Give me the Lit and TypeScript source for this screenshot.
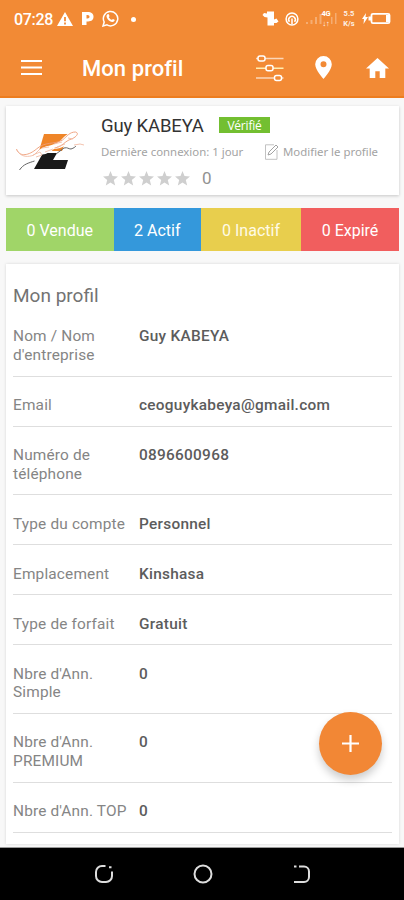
import { LitElement, html, svg, css } from "lit";
import { customElement } from "lit/decorators.js";

const stats = [
  { label: "0 Vendue", tone: "sold" },
  { label: "2 Actif", tone: "active" },
  { label: "0 Inactif", tone: "inactive" },
  { label: "0 Expiré", tone: "expired" },
];

const fields: [string, string][] = [
  ["Nom / Nom d'entreprise", "Guy KABEYA"],
  ["Email", "ceoguykabeya@gmail.com"],
  ["Numéro de téléphone", "0896600968"],
  ["Type du compte", "Personnel"],
  ["Emplacement", "Kinshasa"],
  ["Type de forfait", "Gratuit"],
  ["Nbre d'Ann. Simple", "0"],
  ["Nbre d'Ann. PREMIUM", "0"],
  ["Nbre d'Ann. TOP", "0"],
];

@customElement("status-bar")
class StatusBar extends LitElement {
  static styles = css`
    :host { display: flex; height: 37px; padding: 0 13px 0 14px; align-items: center; color: #fff;
      justify-content: space-between; font: 500 16px/20px Roboto, sans-serif; }
    .group { display: flex; align-items: center; }
    .time { width: 43px; letter-spacing: -0.3px; margin-top: 2px; }
    .park { width: 14px; margin-left: 8px; margin-right: 7px; }
    .dot { width: 5px; height: 5px; border-radius: 50%; background: #fff; margin-left: 12px; margin-top: 1px; }
    .hotspot { margin-left: 6px; }
    .signal { margin-left: 7px; }
    .stack { display: flex; flex-direction: column; align-items: center; gap: 1px; font: 700 7.5px/9px Roboto, sans-serif; }
    .net { width: 8px; letter-spacing: -0.3px; }
    .speed { width: 14px; margin: 0 6px 0 5px; opacity: .88; }
    svg { display: block; fill: #fff; }
  `;
  render() {
    return html`
      <div class="group">
        <span class="time">07:28</span>
        <svg width="16" height="14" viewBox="0 0 16 14"><path fill-rule="evenodd" d="M8 0 16 14H0ZM7.100 5v4.200h1.800V5Zm0 5.600v1.800h1.800v-1.800Z"/></svg>
        <svg class="park" width="14" height="15" viewBox="0 0 14 15"><path fill-rule="evenodd" d="M1 1h5.500C10.500 1 12.500 3 12.500 5.800S10.500 10.500 7.200 10.500H5.500V14H1Zm4.500 3v3.500h1c1.300 0 2-.6 2-1.700S7.800 4 6.500 4Z"/></svg>
        <svg width="17" height="17" viewBox="0 0 17 17"><path fill="none" stroke="#fff" stroke-width="1.500" d="M1 16 2.200 12A7.200 7.200 0 1 1 5 14.900Z"/><path d="M5.500 4.300c.6-.5 1.200-.4 1.400.2l.6 1.400c.1.500-.7 1-.7 1.300.6 1.200 1.600 2.100 2.900 2.600.5-.1.900-1 1.300-.9l1.500.8c.4.3.1 1.300-.6 1.800-1.100.8-2.900.3-4.300-.6-1.300-.9-2.700-2.600-3-4-.2-1 .3-2.100.9-2.600Z"/></svg>
        <span class="dot"></span>
      </div>
      <div class="group">
        <svg width="17" height="15" viewBox="0 0 17 15"><path d="M5 .5h7V8.500l2.500-1 2 3-2 1.500H12v2.500H5.500V6.500L2.500 6 .5 4l1.500-2 3 .5Z"/></svg>
        <svg class="hotspot" width="14" height="14" viewBox="0 0 14 14"><circle cx="7" cy="7" r="5.900" fill="none" stroke="#fff" stroke-width="1.500"/><path fill="none" stroke="#fff" stroke-width="1.500" d="M4.500 9.800A3.300 3.300 0 1 1 9.500 9.800M7 6.500V12"/></svg>
        <svg class="signal" width="16" height="13" viewBox="0 0 16 13" opacity=".3"><path d="M0 10h2v2H0ZM4.500 8h2v4h-2ZM9 5h2v7H9ZM13.500 2h2v10h-2Z"/></svg>
        <span class="stack net"><span>4G</span><span>↓↑</span></span>
        <svg width="7" height="13" viewBox="0 0 7 13" opacity=".3"><path d="M1 5h1.500v7H1ZM5 1h1.500v11H5Z"/></svg>
        <span class="stack speed"><span>5.5</span><span>K/s</span></span>
        <svg width="29" height="13" viewBox="0 0 29 13"><path d="M4 1 0 7h2L1.500 12 6 5H3.500Z"/><rect x="9.500" y="1.800" width="18" height="9.400" rx="1.500" fill="none" stroke="#fff" stroke-width="1.800"/><path d="M6.500 4.500H9v4H6.500ZM24 3H27v7h-3Z"/></svg>
      </div>`;
  }
}

@customElement("app-toolbar")
class AppToolbar extends LitElement {
  static styles = css`
    :host { display: flex; height: 61px; align-items: center; box-sizing: border-box;
      padding: 2px 15px 0 21px; border-bottom: 2px solid #ed7d1f; color: #fff; }
    .title { margin: 3px 0 0 40px; flex: 1; font: 500 22px/28px Roboto, sans-serif; letter-spacing: .07px; }
    .sliders { margin-right: 31px; }
    .pin { margin-right: 34px; }
    svg { display: block; fill: #fff; }
  `;
  render() {
    return html`
      <svg width="21" height="16" viewBox="0 0 21 16"><path d="M0 0h21v2H0ZM0 6.500h21v2H0ZM0 13h21v2H0Z"/></svg>
      <span class="title">Mon profil</span>
      <svg class="sliders" width="28" height="28" viewBox="0 0 28 28">
        <g fill="none" stroke="#fff" stroke-width="1.500">
          <path opacity=".65" d="M0 4.500h2M9 4.500h18.500"/><path stroke="#ffedb0" d="M0 14.200h10M17 14.200h10.500"/><path opacity=".65" d="M0 24h18.500M25.500 24h2"/>
          <rect x="2" y="1.900" width="7" height="5.200" rx="2"/><rect x="10" y="11.600" width="7" height="5.200" rx="2"/><rect x="18.500" y="21.400" width="7" height="5.200" rx="2"/>
        </g>
      </svg>
      <svg class="pin" width="17" height="23" viewBox="0 0 17 23"><path fill-rule="evenodd" d="M8.500 0A8.300 8.300 0 0 1 16.800 8.300C16.800 14 8.500 23 8.500 23S.2 14 .2 8.300A8.300 8.300 0 0 1 8.500 0Zm0 5.200a3 3 0 1 0 0 6 3 3 0 0 0 0-6Z"/></svg>
      <svg width="23" height="20" viewBox="0 0 23 20"><path d="M9.300 20v-6.700h4.400V20h5.600v-9.500H23L11.500 0 0 10.500h3.700V20Z"/></svg>`;
  }
}

const star = svg`<path d="m7.500 0 2 5.100 5.500.4-4.200 3.500 1.400 5.500-4.700-3-4.700 3L4.200 9 0 5.500l5.500-.4Z"/>`;

@customElement("user-card")
class UserCard extends LitElement {
  static styles = css`
    :host { display: flex; height: 89px; margin: 8px 5px 0 6px; background: #fff; box-shadow: 0 1px 3px #0003;
      font-family: Roboto, sans-serif; color: #929292; }
    .logo { margin: 24px 16px 0 9px; flex: none; }
    .info { flex: 1; padding-top: 8px; }
    .line { display: flex; align-items: center; }
    .name { font-size: 18.5px; line-height: 24px; color: #333; font-weight: 400; width: 118px; letter-spacing: -.15px; white-space: nowrap; }
    .badge { width: 51px; height: 16px; background: #73bf31; color: #fff; text-align: center;
      font: 500 12px/17px "Open Sans", sans-serif; letter-spacing: -.2px; margin-top: -3px; }
    .meta { font: 400 11.4px/16px "Noto Sans", sans-serif; margin-top: 6px; color: #a3a3a3; white-space: nowrap; }
    .seen { width: 163px; letter-spacing: 0; }
    .edit { letter-spacing: 0; margin-left: 4px; }
    .rating { margin: 8px 0 0 2px; gap: 3px; }
    .score { font-size: 17px; line-height: 20px; margin-left: 9px; }
    svg { display: block; }
    .star { fill: #cfcfcf; }
  `;
  render() {
    return html`
      <svg class="logo" width="70" height="44" viewBox="0 0 70 44">
        <path fill="#ef8528" d="M29 4h24l-6 17H24Z"/>
        <path fill="#191919" d="m28 23 14 0-4 7 15 0-3 9H19Z"/>
        <path fill="#fff" d="M8 27c7 1 10-2 15-6 8-7 14-4 22-10 5-5 8-9 15-9 4 2 2 6-4 8-4 5-10 9-17 9-7 6-12 6-18 5-4 3-9 4-13 3Z"/>
        <g fill="none" stroke="#f2bca6" stroke-width=".9">
          <path stroke="#ee9c76" d="M1.500 19c3 9 13 6 20 0 9-8 17-4 26-9 5-4 7-8 13-8 4 1 1 5-4 7-7 2-9 8-17 9"/>
          <path d="M2 20c4 8 12 7 17 5l6-6M18 25l7-3 2 3-6 2m6-9 7-1m-4 5 8-3m1-5 8-2m-5 5 8-3m3-6 5 1m1 6 6-1 4 1"/>
        </g>
        <path fill="none" stroke="#666" stroke-width="1" d="M4.500 40c4-6 9-7 15-9M41 24l8-6c4-1 4 1 7 1 3-1 4-2 5-3"/>
      </svg>
      <div class="info">
        <div class="line"><span class="name">Guy KABEYA</span><span class="badge">Vérifié</span></div>
        <div class="line meta">
          <span class="seen">Dernière connexion: 1 jour</span>
          <svg width="15" height="16" viewBox="0 0 15 16" fill="none" stroke="#bbb" stroke-width=".9"><path d="M10 .8H1.500v14.500h11.500V6"/><path stroke="#999" d="m4 11 1-3 7-7 2 2-7 7Z"/></svg>
          <span class="edit">Modifier le profile</span>
        </div>
        <div class="line rating">
          ${[0, 1, 2, 3, 4].map(() => html`<svg class="star" width="15" height="15" viewBox="0 0 15 15">${star}</svg>`)}
          <span class="score">0</span>
        </div>
      </div>`;
  }
}

@customElement("profile-details")
class ProfileDetails extends LitElement {
  static styles = css`
    :host { display: block; box-sizing: border-box; height: 580px; overflow: hidden; padding: 20.400px 7px 0; background: #fff;
      font-family: Roboto, sans-serif; color: #858585; }
    .heading { font-size: 19px; line-height: 24px; color: #737373; }
    .rows { margin-top: -.4px; }
    .row { display: grid; grid-template-columns: 126px 1fr; box-sizing: border-box;
      padding: 19.200px 0 11.100px; border-bottom: 1px solid #dedede; font-size: 15.400px; line-height: 18.700px; letter-spacing: .17px; }
    .label { padding-right: 12px; }
    .wide { white-space: nowrap; padding-right: 0; }
    .value { font-weight: 500; color: #5c5c5c; letter-spacing: .27px; }
  `;
  render() {
    return html`
      <div class="heading">Mon profil</div>
      <div class="rows">
        ${fields.map(([label, value]) => html`<div class="row">
          <span class="label ${label.length < 16 ? "wide" : ""}">${label}</span><span class="value">${value}</span>
        </div>`)}
      </div>`;
  }
}

@customElement("app-root")
class AppRoot extends LitElement {
  static styles = css`
    :host { display: flex; flex-direction: column; position: relative; width: 404px; height: 900px; overflow: hidden; background: #f8f8f8; }
    .top { background: #f28a35; flex: none; }
    .stats { display: grid; grid-template: 43px / 107.500px 87.500px 100px 98px; height: 43px; margin: 13px 5px 0 6px; flex: none;
      font: 400 16px/45px Roboto, sans-serif; color: #fff; text-align: center; }
    .stats > * { height: 43px; }
    .sold { background: #a0d568; }
    .active { background: #3498db; }
    .inactive { background: #e8ce4d; color: #fffbe6; }
    .expired { background: #f15e5e; }
    .details { margin: 13px 5px 0 6px; flex: none; box-shadow: 0 0 3px #0002; }
    .nav { margin-top: auto; height: 53px; background: #000; border-top: 1px solid #999; box-sizing: border-box; display: flex; align-items: center;
      justify-content: space-between; padding: 0 93px 0 94px; }
    .home { margin-right: 2px; }
    .fab { position: absolute; left: 319px; top: 712px; width: 63px; height: 63px; border-radius: 50%; border: 0; padding: 0;
      background: #f28735; display: grid; place-items: center; box-shadow: 0 5px 8px #0003; }
    svg { display: block; }
  `;
  render() {
    return html`
      <header class="top"><status-bar></status-bar><app-toolbar></app-toolbar></header>
      <user-card></user-card>
      <div class="stats">${stats.map((s) => html`<div class=${s.tone}>${s.label}</div>`)}</div>
      <profile-details class="details"></profile-details>
      <button class="fab" aria-label="+"><svg width="17" height="17" viewBox="0 0 17 17"><path stroke="#fff" stroke-width="2.200" d="M8.500 0v17M0 8.500h17"/></svg></button>
      <nav class="nav">
        <svg width="20" height="20" viewBox="0 0 20 20" fill="none" stroke="#ddd" stroke-width="2"><path d="M11.500 2H8a6 6 0 0 0-6 6v4a6 6 0 0 0 6 6h4a6 6 0 0 0 6-6V7.500M15 3.200h2.500"/></svg>
        <svg class="home" width="20" height="20" viewBox="0 0 20 20" fill="none" stroke="#ddd" stroke-width="2"><circle cx="10" cy="10" r="8.500"/></svg>
        <svg width="18" height="20" viewBox="0 0 18 20" fill="none" stroke="#ddd" stroke-width="2"><path d="M6 2.500h5a5 5 0 0 1 5 5V13a5 5 0 0 1-5 5H1M1 2.500h2.500"/></svg>
      </nav>`;
  }
}
